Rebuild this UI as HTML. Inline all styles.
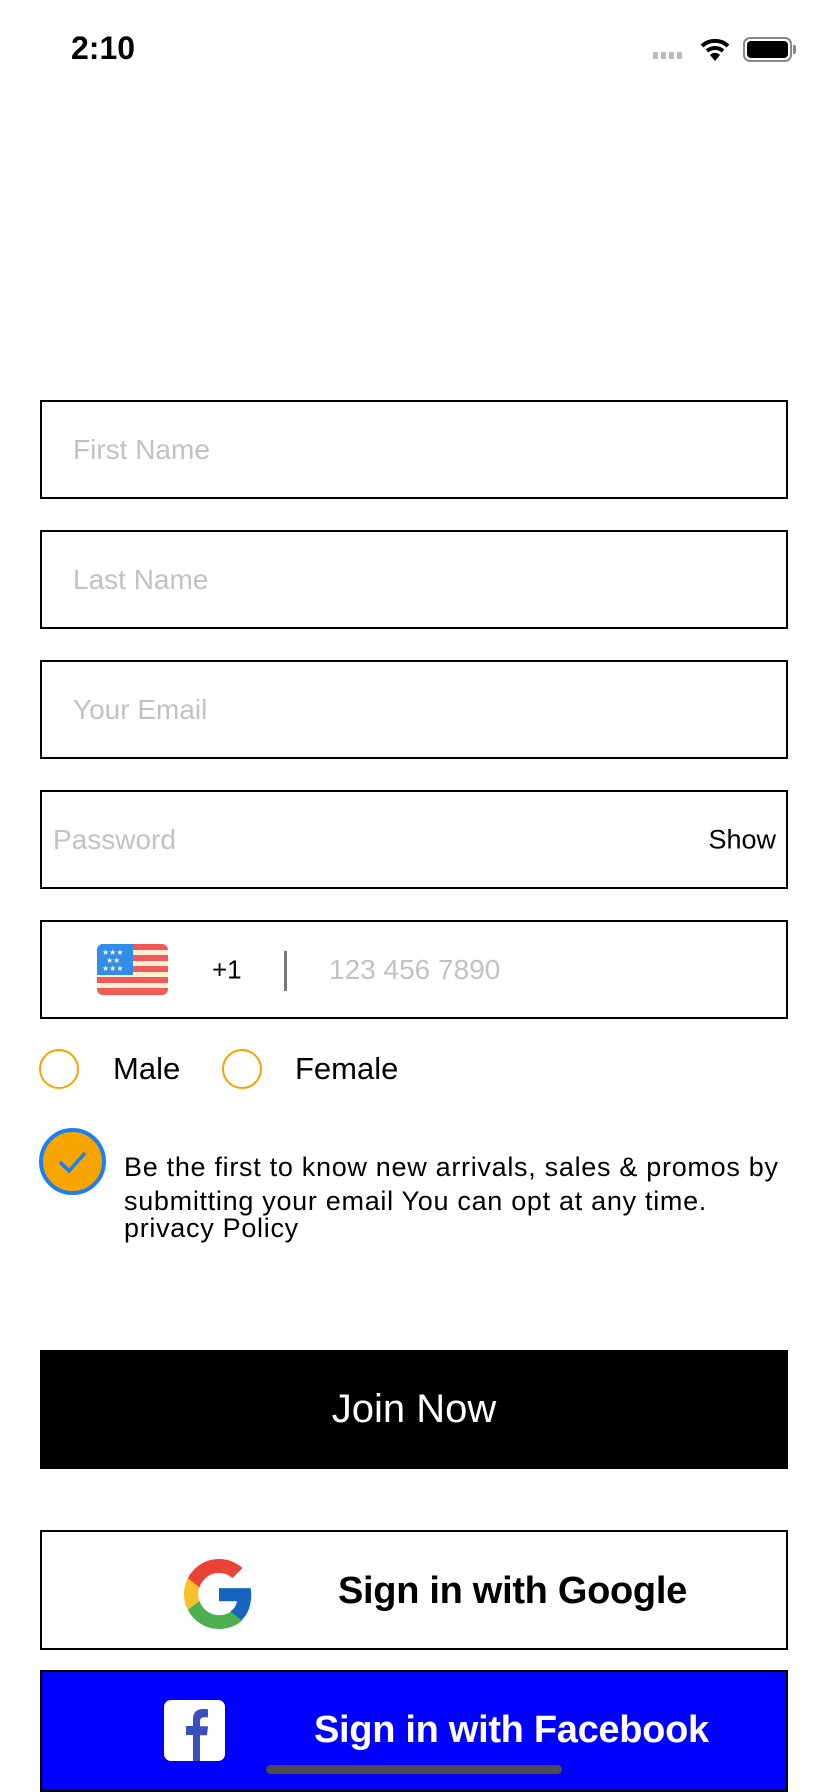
<!DOCTYPE html>
<html><head><meta charset="utf-8"><style>
*{margin:0;padding:0;box-sizing:border-box}
body{width:828px;height:1792px;background:#fff;font-family:"Liberation Sans",sans-serif;position:relative;overflow:hidden}
.a{position:absolute}
.inp{position:absolute;left:40px;width:748px;height:99px;border:2px solid #000}
.ph{position:absolute;top:50%;transform:translateY(-50%);font-size:28px;color:#c2c2c2;white-space:nowrap}
.txt{font-size:26px;color:#000;line-height:30px}
</style></head><body>
<div class="a" style="left:71px;top:30px;font-size:32px;font-weight:bold">2:10</div>
<div class="a" style="left:653px;top:52px;display:flex;gap:3px">
<span style="width:5px;height:7px;background:#bbb;border-radius:1px"></span><span style="width:5px;height:7px;background:#bbb;border-radius:1px"></span><span style="width:5px;height:7px;background:#bbb;border-radius:1px"></span><span style="width:5px;height:7px;background:#bbb;border-radius:1px"></span></div>
<svg class="a" style="left:700px;top:38px" width="30" height="24" viewBox="0 0 30 24"><path d="M2 8 A19 19 0 0 1 28 8" stroke="#000" stroke-width="4" fill="none"/><path d="M7 13 A12 12 0 0 1 23 13" stroke="#000" stroke-width="4" fill="none"/><path d="M10 17 L15 23 L20 17 A7 7 0 0 0 10 17Z" fill="#000"/></svg>
<div class="a" style="left:743px;top:37px;width:49px;height:25px;border:2px solid #888;border-radius:7px;padding:2px"><div style="width:100%;height:100%;background:#000;border-radius:4px"></div></div>
<div class="a" style="left:793px;top:45px;width:3px;height:9px;background:#888;border-radius:0 2px 2px 0"></div>

<div class="inp" style="top:400px"><span class="ph" style="left:31px">First Name</span></div>
<div class="inp" style="top:530px"><span class="ph" style="left:31px">Last Name</span></div>
<div class="inp" style="top:660px"><span class="ph" style="left:31px">Your Email</span></div>
<div class="inp" style="top:790px"><span class="ph" style="left:11px">Password</span><span class="ph" style="right:10px;color:#000;font-size:27px">Show</span></div>
<div class="inp" style="top:920px">
<svg class="a" style="left:55px;top:22px" width="71" height="51" viewBox="0 0 71 51"><defs><clipPath id="c"><rect width="71" height="51" rx="6"/></clipPath></defs><g clip-path="url(#c)"><rect width="71" height="51" fill="#fdf0d0"/><rect y="0" width="71" height="6" fill="#f25a5a"/><rect y="11" width="71" height="6" fill="#f25a5a"/><rect y="22" width="71" height="6" fill="#f25a5a"/><rect y="33" width="71" height="6" fill="#f25a5a"/><rect y="44" width="71" height="7" fill="#f25a5a"/><rect width="36" height="31" fill="#2f8ee8"/><g fill="#fdf0d0" font-size="8"><text x="5" y="11">★★★</text><text x="9" y="19">★★</text><text x="5" y="27">★★★</text></g></g></svg>
<span class="ph" style="left:170px;color:#000;font-size:26px">+1</span>
<div class="a" style="left:242px;top:29px;width:3px;height:40px;background:#777"></div>
<span class="ph" style="left:287px">123 456 7890</span>
</div>

<div class="a" style="left:39px;top:1049px;width:40px;height:40px;border:2px solid #f5a300;border-radius:50%"></div>
<div class="a txt" style="left:113px;top:1052px;font-size:31px;line-height:34px">Male</div>
<div class="a" style="left:222px;top:1049px;width:40px;height:40px;border:2px solid #f5a300;border-radius:50%"></div>
<div class="a txt" style="left:295px;top:1052px;font-size:31px;line-height:34px">Female</div>

<div class="a" style="left:39px;top:1128px;width:67px;height:67px;border:4px solid #1a80f0;border-radius:50%;background:#f9a500"></div>
<svg class="a" style="left:58px;top:1150px" width="30" height="24" viewBox="0 0 30 24"><path d="M2 12 L11 21 L27 3" stroke="#1a80f0" stroke-width="3.5" fill="none"/></svg>
<div class="a txt" style="left:124px;top:1150px;font-size:27px;letter-spacing:0.7px;line-height:34px;white-space:nowrap">Be the first to know new arrivals, sales &amp; promos by<br>submitting your email You can opt at any time.</div>
<div class="a txt" style="left:124px;top:1213px;font-size:27px;letter-spacing:0.7px;line-height:30px">privacy Policy</div>

<div class="a" style="left:40px;top:1350px;width:748px;height:119px;background:#000;color:#fff;font-size:40px;display:flex;align-items:center;justify-content:center">Join Now</div>

<div class="a" style="left:40px;top:1530px;width:748px;height:120px;border:2px solid #000">
<svg class="a" style="left:142px;top:27px" width="70" height="70" viewBox="0 0 48 48"><path fill="#EA4335" d="M24 9.5c3.5 0 6.7 1.2 9.2 3.6l6.9-6.9C35.9 2.4 30.5 0 24 0 14.6 0 6.6 5.4 2.6 13.3l8 6.2C12.5 13.7 17.8 9.5 24 9.5z"/><path fill="#1565C0" d="M46.1 24.5c0-1.6-.1-3.1-.4-4.5H24v9h12.4c-.5 2.9-2.2 5.4-4.7 7.1l7.7 6c4.5-4.2 6.7-10.3 6.7-17.6z"/><path fill="#FBC02D" d="M10.5 28.6c-.5-1.5-.8-3-.8-4.6s.3-3.1.8-4.6l-8-6.2C.9 16.5 0 20.1 0 24s.9 7.5 2.6 10.8l7.9-6.2z"/><path fill="#4CAF50" d="M24 48c6.5 0 11.9-2.1 15.9-5.8l-7.7-6c-2.2 1.5-5 2.3-8.2 2.3-6.2 0-11.5-4.2-13.4-9.9l-8 6.2C6.6 42.6 14.6 48 24 48z"/></svg>
<div class="a" style="left:296px;top:38px;font-size:38px;font-weight:bold;letter-spacing:-0.3px;white-space:nowrap">Sign in with Google</div>
</div>

<div class="a" style="left:40px;top:1670px;width:748px;height:122px;border:2px solid #000;background:#0000ff">
<div class="a" style="left:122px;top:28px;width:61px;height:61px;background:#fff;border-radius:7px;overflow:hidden">
<svg width="61" height="61" viewBox="0 0 61 61"><path d="M29 61V35h-7v-9h7v-7c0-7 4-10 10-10 3 0 5 .2 5 .2v8h-4c-3 0-4 2-4 4v5h8l-1 9h-7v26z" fill="#3b4fbf"/></svg></div>
<div class="a" style="left:272px;top:37px;font-size:38px;font-weight:bold;color:#fff;letter-spacing:-0.3px;white-space:nowrap">Sign in with Facebook</div>
</div>
<div class="a" style="left:266px;top:1765px;width:296px;height:9px;background:#4d4d4d;border-radius:5px"></div>
</body></html>
